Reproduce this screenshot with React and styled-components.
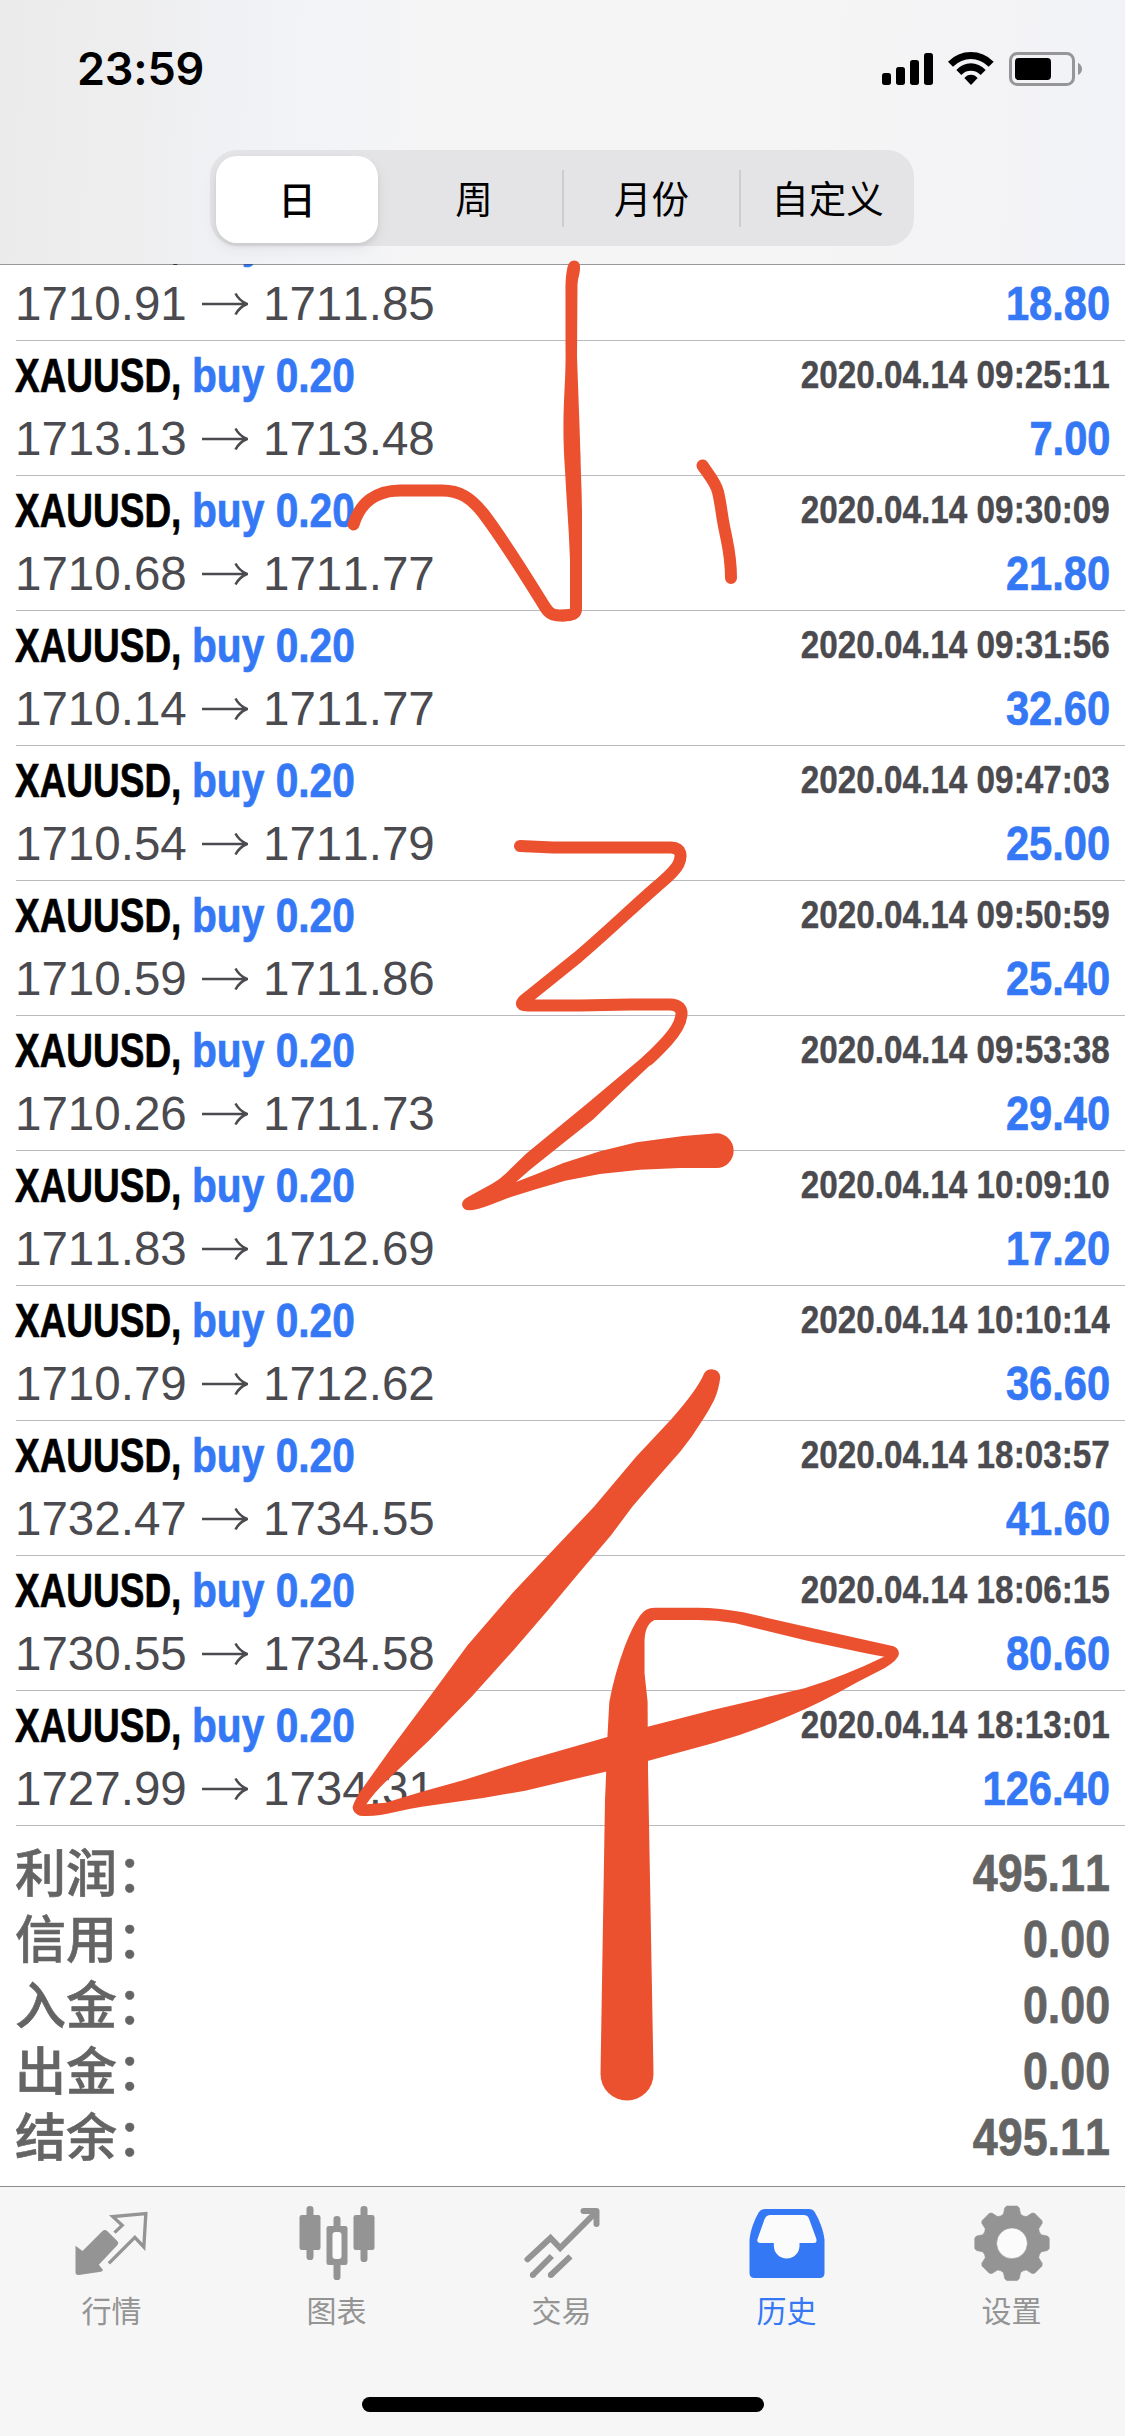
import React from "react";
import styled, { createGlobalStyle } from "styled-components";

const GlobalStyle = createGlobalStyle`
  body { margin: 0; background: #fff; }
  * { box-sizing: border-box; }
`;

const Screen = styled.div`
  position: relative;
  width: 1125px;
  height: 2436px;
  overflow: hidden;
  display: flex;
  flex-direction: column;
  background: #fff;
  font-family: "Liberation Sans", "Noto Sans CJK SC", sans-serif;
  font-kerning: none;
`;

const Header = styled.header`
  position: relative;
  z-index: 1;
  flex: none;
  height: 265px;
  margin-bottom: -1px;
  background: linear-gradient(93deg, #ebebeb 0%, #eeeeef 12%, #f1f3f7 26%, #f5f5f6 38%, #f5f5f5 70%, #f3f3f6 90%, #f1f3f8 100%);
  background-clip: padding-box;
  border-bottom: 1px solid rgba(60, 60, 67, 0.52);
`;

const StatusBar = styled.div`
  height: 150px;
  padding: 0 42px 0 77px;
  display: flex;
  justify-content: space-between;
`;

const Clock = styled.time`
  font-family: Inter, "Liberation Sans", sans-serif;
  font-weight: 600;
  font-size: 45px;
  line-height: 138px;
  letter-spacing: -0.2px;
  color: #000;
`;

const StatusIcons = styled.svg`
  width: 220px;
  height: 60px;
  margin: 40px -7px 0 0;
`;

const Segments = styled.div`
  width: 704px;
  height: 96px;
  margin-left: 210px;
  padding: 6px 0 6px 6px;
  border-radius: 27px;
  background: #e4e4e6;
  display: grid;
  grid-template-columns: 170px 176px 177px 175px;
`;

const Segment = styled.button`
  border: 0;
  padding: 3px 0 0;
  margin: ${(p) => (p.$active ? "0 8px 0 0" : "14px 0 16px")};
  border-left: ${(p) => (p.$divider ? "2px solid #cdcdd0" : "0")};
  border-radius: ${(p) => (p.$active ? "21px" : "0")};
  background: ${(p) => (p.$active ? "#fff" : "transparent")};
  box-shadow: ${(p) => (p.$active ? "0 3px 5px rgba(0,0,0,.07), 0 6px 16px rgba(0,0,0,.06)" : "none")};
  font: ${(p) => (p.$active ? 500 : 400)} 37.5px/54px "Liberation Sans", "Noto Sans CJK SC", sans-serif;
  color: #000;
`;

const DealList = styled.main`
  flex: none;
  height: 1562px;
  padding-left: 16px;
  overflow: hidden;
  display: flex;
  flex-direction: column;
  justify-content: flex-end;
`;

const Deal = styled.article`
  flex: none;
  height: 135px;
  padding-right: 15px;
  border-bottom: 1px solid #bababe;
`;

const Line = styled.div`
  display: flex;
  justify-content: space-between;
  height: ${(p) => p.$h}px;
  line-height: ${(p) => p.$h}px;
  white-space: nowrap;
`;

const Title = styled.div`
  display: flex;
  margin-left: -1px;
  font-weight: 700;
  font-size: 48px;
  -webkit-text-stroke: 0.7px currentColor;
`;

const Symbol = styled.span`
  width: 177px;
  color: #000;
  transform: scaleX(0.77);
  transform-origin: left;
`;

const Side = styled.span`
  color: #3478f6;
  transform: scaleX(0.848);
  transform-origin: left;
`;

const Time = styled.time`
  font-weight: 700;
  font-size: 38px;
  line-height: 68px;
  color: #4a4a4f;
  -webkit-text-stroke: 0.4px currentColor;
  transform: scaleX(0.876);
  transform-origin: right;
`;

const Prices = styled.div`
  display: flex;
  align-items: center;
  margin-left: -1px;
  font-size: 48px;
  color: #4a4a4f;
`;

const Price = styled.span`
  width: ${(p) => p.$w}px;
  transform: scaleX(0.99);
  transform-origin: left;
`;

const Arrow = styled.svg`
  width: 46px;
  height: 24px;
  margin: 0 15px 0 0;
`;

const Profit = styled.span`
  font-weight: 700;
  font-size: 48px;
  color: #3478f6;
  -webkit-text-stroke: 0.7px currentColor;
  transform: scaleX(0.867);
  transform-origin: right;
`;

const Summary = styled.section`
  flex: 1;
  padding: 15px 15px 0 15px;
`;

const SummaryRow = styled.div`
  display: flex;
  justify-content: space-between;
  height: 66px;
  line-height: 66px;
  font-size: 51px;
  color: #646464;
`;

const SummaryLabel = styled.span`
  padding-top: 1px;
  font-weight: 500;
  -webkit-text-stroke: 0.6px currentColor;
`;

const SummaryValue = styled.span`
  font-weight: 700;
  -webkit-text-stroke: 0.7px currentColor;
  transform: scaleX(0.88);
  transform-origin: right;
`;

const TabBar = styled.nav`
  flex: none;
  height: 250px;
  border-top: 1px solid #8c8c8c;
  background: #f6f6f6;
  display: flex;
  flex-direction: column;
  align-items: center;
`;

const Tabs = styled.div`
  width: 100%;
  height: 210px;
  padding-top: 17px;
  display: grid;
  grid-template-columns: repeat(5, 1fr);
`;

const Tab = styled.a`
  display: flex;
  flex-direction: column;
  align-items: center;
  color: ${(p) => (p.$active ? "#3478f6" : "#949494")};
  font-size: 30px;
  line-height: 40px;
  gap: 8px;
`;

const TabLabel = styled.span`
  margin-right: 2px;
`;

const TabIcon = styled.svg`
  width: 80px;
  height: 80px;
`;

const HomeIndicator = styled.div`
  width: 402px;
  height: 15px;
  border-radius: 8px;
  background: #000;
`;

const Ink = styled.svg`
  position: absolute;
  z-index: 2;
  inset: 0;
  width: 1125px;
  height: 2436px;
  pointer-events: none;
`;

const deals = [
  ["1710.91", "1711.85", "", "18.80"],
  ["1713.13", "1713.48", "2020.04.14 09:25:11", "7.00"],
  ["1710.68", "1711.77", "2020.04.14 09:30:09", "21.80"],
  ["1710.14", "1711.77", "2020.04.14 09:31:56", "32.60"],
  ["1710.54", "1711.79", "2020.04.14 09:47:03", "25.00"],
  ["1710.59", "1711.86", "2020.04.14 09:50:59", "25.40"],
  ["1710.26", "1711.73", "2020.04.14 09:53:38", "29.40"],
  ["1711.83", "1712.69", "2020.04.14 10:09:10", "17.20"],
  ["1710.79", "1712.62", "2020.04.14 10:10:14", "36.60"],
  ["1732.47", "1734.55", "2020.04.14 18:03:57", "41.60"],
  ["1730.55", "1734.58", "2020.04.14 18:06:15", "80.60"],
  ["1727.99", "1734.31", "2020.04.14 18:13:01", "126.40"],
];

const totals = [
  ["利润：", "495.11"],
  ["信用：", "0.00"],
  ["入金：", "0.00"],
  ["出金：", "0.00"],
  ["结余：", "495.11"],
];

const gearPath = () => {
  let d = "";
  for (let i = 0; i < 8; i++) {
    const pts = [
      [-22.5, 29.6], [-16.5, 30.4], [-11.5, 36.2], [-8, 37.6],
      [8, 37.6], [11.5, 36.2], [16.5, 30.4],
    ].map(([deg, r]) => {
      const a = ((deg + i * 45) * Math.PI) / 180;
      return `${(39 + Math.sin(a) * r).toFixed(2)} ${(39.3 - Math.cos(a) * r).toFixed(2)}`;
    });
    d += (i ? "L" : "M") + pts.join("L");
  }
  return d + "Z M54.4 39.3a15.4 15.4 0 1 0 -30.8 0a15.4 15.4 0 1 0 30.8 0Z";
};

const QuotesIcon = () => (
  <TabIcon viewBox="22.5 27 240 240" fill="currentColor">
    <path d="M30 152L51 168L111 108Q118 102 125 108L156 139Q161 145 156 150L100 209L112 224Q113 228 106 230L40 240Q30 241 30 232Z" />
    <path d="M147 113L170 91L142 65L241 56L235 156L208 127L130 205" fill="none" stroke="currentColor" strokeWidth="10" />
  </TabIcon>
);

const ChartIcon = () => (
  <TabIcon viewBox="697.5 27 240 240" fill="currentColor">
    <rect x="702" y="60" width="63" height="105" rx="7" />
    <rect x="723" y="33" width="21" height="162" rx="10" />
    <rect x="864" y="60" width="63" height="105" rx="7" />
    <rect x="885" y="33" width="21" height="168" rx="10" />
    <rect x="804" y="63" width="21" height="192" rx="10" />
    <rect x="783" y="93" width="63" height="117" rx="7" />
    <rect x="801" y="111" width="27" height="81" rx="9" fill="#fbfbfb" />
  </TabIcon>
);

const TradeIcon = () => (
  <TabIcon viewBox="37.5 27 240 240" fill="none" stroke="currentColor" strokeWidth="18">
    <path d="M51 193L120 129L149 159L252 56" strokeLinecap="round" />
    <path d="M219 48H258V87" strokeLinecap="round" strokeLinejoin="round" />
    <path d="M67 240L124 183M121 240L180 184" />
    <g fill="currentColor" stroke="none">
      <circle cx="67" cy="240" r="9" />
      <circle cx="121" cy="240" r="9" />
    </g>
  </TabIcon>
);

const HistoryIcon = () => (
  <TabIcon viewBox="712.5 27 240 240" fill="currentColor">
    <path d="M717 135C719 106 733 72 745 52Q751 42 763 42H895Q907 42 913 52C926 74 939 106 942 135V234Q942 249 927 249H732Q717 249 717 234Z" />
    <path d="M780 60H879Q891 60 895 70L917 130Q921 144 910 144H867V152A38.500 38.500 0 0 1 790 152V144H749Q738 144 741 132L762 73Q767 60 780 60Z" fill="#fbfbfb" />
  </TabIcon>
);

const SettingsIcon = () => (
  <TabIcon viewBox="0 0 80 80" fill="currentColor">
    <circle cx="39" cy="39.300" r="16" fill="#fbfbfb" />
    <path d={gearPath()} fillRule="evenodd" stroke="currentColor" strokeWidth="0.6" strokeLinejoin="round" />
  </TabIcon>
);

const tabs = [
  ["行情", QuotesIcon],
  ["图表", ChartIcon],
  ["交易", TradeIcon],
  ["历史", HistoryIcon],
  ["设置", SettingsIcon],
];

const Annotation = () => (
  <Ink viewBox="0 0 1125 2436" fill="#eb512f">
    <path d="M567.500 267Q569 260.500 574 260.500Q580.500 261 580 268C580 274 578 277 577.500 285L577 355C577.500 375 580 430 580.500 455C581 480 582 490 582 510V608Q582 616 576 619Q571 621.500 561 621.500L560 610L570 609V608V560C569 530 566.500 500 565 470C563 440 563 420 564.500 390C566 365 565.500 350 565.500 340V290C565.500 280 566 275 567.500 267Z" />
    <g fill="none" stroke="#eb512f" strokeWidth="12" strokeLinecap="round" strokeLinejoin="round">
      <path d="M353.500 524.500C360 503 376 490.500 400 490.500H442C460 490.500 471 498 483 513C505 542 527 578 545 607C550 615 554 615.500 562 615.500C572 615 576 615 576 607" />
      <path d="M702.500 465.500C709 475 716 483 718 492C721 504 722 518 725 531C728 546 731 556 731 578" />
      <path d="M520 846L553 847.500H671C682 848 682 856 678.500 864C674 873 665 879 655 888C630 910 605 934 578 957L527 998C520 1003 520 1005.500 528 1005.500H580L630 1004.500H670Q680 1005 681.500 1012C682 1020 676 1031 667 1041Q656 1053 648 1060" />
    </g>
    <g transform="translate(440 800) scale(.33333)">
      <path d="M650 735L600 778L440 912L260 1060L200 1118Q180 1138 155 1152L85 1190Q66 1199 66 1214Q69 1231 88 1231Q108 1231 150 1215L215 1190L290 1167L375 1142L480 1122L600 1109L720 1104L830 1104A51 52 0 0 0 830 1000L730 1008L590 1027L480 1054L370 1089L290 1122L228 1146L270 1109L345 1049L460 958L560 862L670 758Z" />
    </g>
    <g transform="translate(330 1340) scale(.382653 .333333)">
      <path d="M978 100Q984 88 998 88Q1018 90 1020 112Q1016 150 1004 180Q990 212 975 238L945 290L915 335L850 420L790 500L735 585L650 700L570 810L480 930L370 1070L260 1200L150 1320Q112 1362 95 1393L145 1388L240 1355L350 1320L500 1265L723 1192L830 1160L1000 1110L1240 1045Q1350 1005 1448 950L1470 918Q1487 924 1487 942Q1484 960 1450 984L1380 1025Q1280 1090 1200 1128Q1100 1177 1000 1210L830 1263L720 1295L510 1352L400 1374L240 1400Q200 1407 168 1417Q120 1431 78 1427Q60 1420 59 1402Q65 1374 90 1337L160 1225L270 1055L360 915L480 755L575 640L690 500L800 350L890 240Q960 150 978 100Z" />
      <path d="M722 1300L725 1190L730 1085Q744 1000 770 920Q790 860 810 827Q824 803 848 803H960Q1020 803 1080 817L1250 862L1470 918Q1482 922 1484 936L1448 950L1400 940L1250 903L1060 850Q1010 840 960 840H848Q824 852 822 900V1000L830 1085L831 1300Z" />
    </g>
    <path d="M606.300 1770L605 1800L600.500 2074A26.500 26.500 0 0 0 653.500 2074L647.800 1757Z" />
  </Ink>
);

export default function App() {
  return (
    <Screen>
      <GlobalStyle />
      <Header>
        <StatusBar>
          <Clock>23:59</Clock>
          <StatusIcons viewBox="0 0 660 180">
            <rect x="36" y="99" width="27" height="36" rx="8" />
            <rect x="78" y="81" width="27" height="54" rx="8" />
            <rect x="120" y="60" width="27" height="75" rx="8" />
            <rect x="162" y="39" width="27" height="96" rx="8" />
            <path d="M234 65Q263 36 302.500 36T371 65L356 80Q332 57 302.500 57T249 80Z" />
            <path d="M259 90Q278 70 302.500 70T347 90L332 105Q320 92 302.500 92T274 105Z" />
            <path d="M283 114Q291 104 303 104T323 114L303 135Z" />
            <rect x="421.500" y="40.500" width="189" height="93" rx="20" fill="none" stroke="#969698" strokeWidth="9" />
            <rect x="435" y="54" width="108" height="66" rx="11" />
            <path d="M624 68Q636 75 636 87T624 105Z" fill="#969698" />
          </StatusIcons>
        </StatusBar>
        <Segments>
          <Segment $active>日</Segment>
          <Segment>周</Segment>
          <Segment $divider>月份</Segment>
          <Segment $divider>自定义</Segment>
        </Segments>
      </Header>
      <DealList>
        {deals.map(([open, close, time, profit]) => (
          <Deal key={open}>
            <Line $h={69}>
              <Title>
                <Symbol>XAUUSD,</Symbol>
                <Side>buy 0.20</Side>
              </Title>
              {time && <Time>{time}</Time>}
            </Line>
            <Line $h={57}>
              <Prices>
                <Price $w={187}>{open}</Price>
                <Arrow viewBox="0 0 46 24" fill="none" stroke="currentColor" strokeWidth="2.6">
                  <path d="M0 12H44M33.500 1.500Q37 8.500 45 12Q37 15.500 33.500 22.500" />
                </Arrow>
                <Price $w={180}>{close}</Price>
              </Prices>
              <Profit>{profit}</Profit>
            </Line>
          </Deal>
        ))}
      </DealList>
      <Summary>
        {totals.map(([label, value]) => (
          <SummaryRow key={label}>
            <SummaryLabel>{label}</SummaryLabel>
            <SummaryValue>{value}</SummaryValue>
          </SummaryRow>
        ))}
      </Summary>
      <TabBar>
        <Tabs>
          {tabs.map(([label, Icon]) => (
            <Tab key={label} $active={label === "历史"}>
              <Icon />
              <TabLabel>{label}</TabLabel>
            </Tab>
          ))}
        </Tabs>
        <HomeIndicator />
      </TabBar>
      <Annotation />
    </Screen>
  );
}
